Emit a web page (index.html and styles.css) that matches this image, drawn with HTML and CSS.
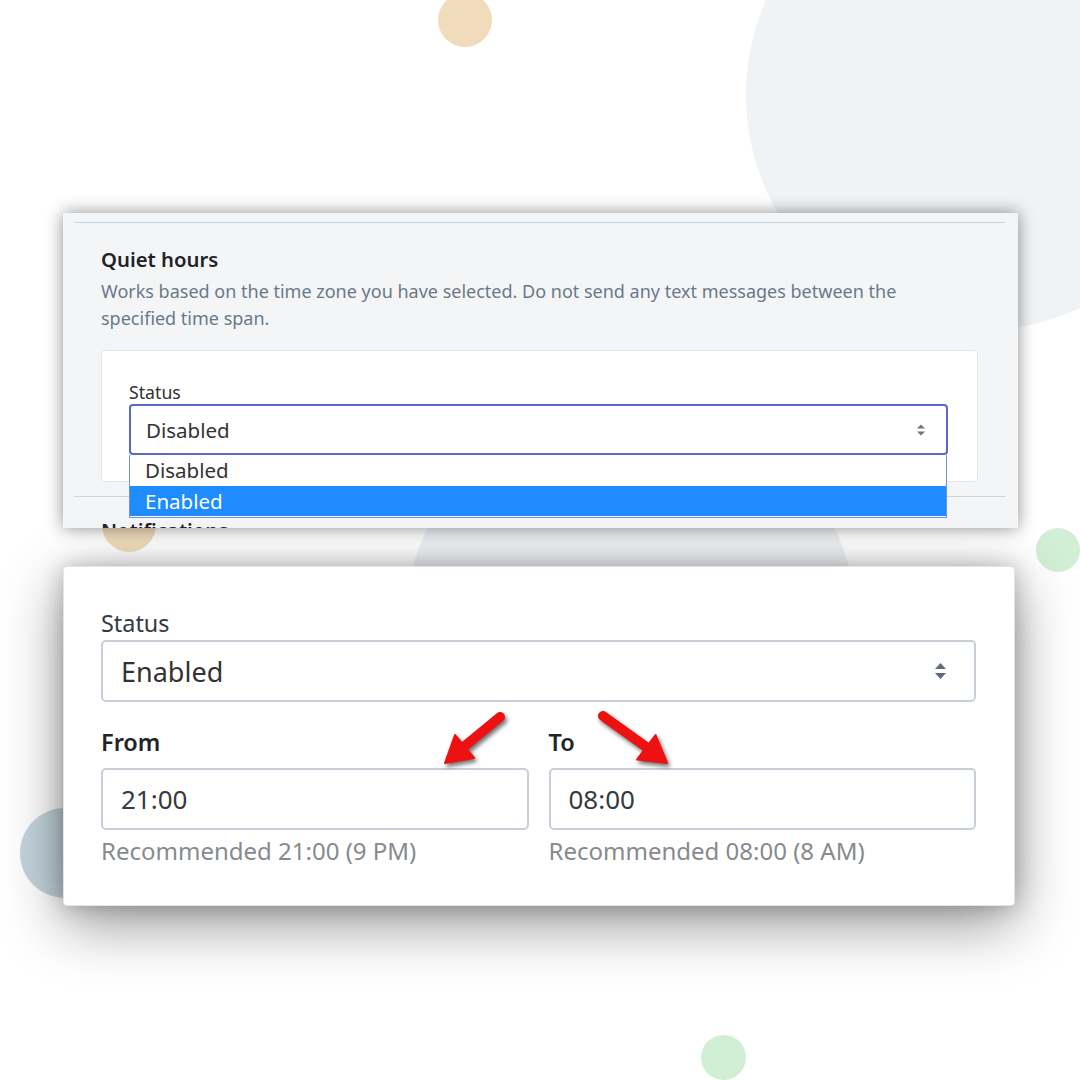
FILE: index.html
```html
<!DOCTYPE html>
<html lang="en">
<head>
    <meta charset="UTF-8">
    <meta name="viewport" content="width=device-width, initial-scale=1.0">
    <title>Quiet hours</title>
    <link rel="stylesheet" href="styles.css">
</head>
<body>
    <div class="stage">
        <!-- background dots -->
        <div class="dot dot-big"></div>
        <div class="dot dot-mid"></div>
        <div class="dot dot-tan-top"></div>
        <div class="dot dot-tan-left"></div>
        <div class="dot dot-green-right"></div>
        <div class="dot dot-green-bottom"></div>
        <div class="dot dot-slate"></div>

        <div class="cards">
            <div class="card card-settings">
                <div class="section">
                    <h3 class="section-title">Quiet hours</h3>
                    <p class="section-desc">Works based on the time zone you have selected. Do not send any text messages between the specified time span.</p>
                    <div class="panel">
                        <label class="small-label">Status</label>
                        <div class="select select-focus">
                            <span>Disabled</span>
                            <svg class="caret" width="10" height="14" viewBox="0 0 10 14"><path d="M1 5.5 5 1.5 9 5.5Z M1 8.5 5 12.5 9 8.5Z" fill="#6b7785"/></svg>
                            <ul class="options">
                                <li>Disabled</li>
                                <li class="active">Enabled</li>
                            </ul>
                        </div>
                    </div>
                </div>
                <div class="section section-next">
                    <h3 class="section-title">Notifications</h3>
                </div>
            </div>

            <div class="card card-zoom">
                <label class="big-label">Status</label>
                <div class="select select-big">
                    <span>Enabled</span>
                    <svg class="caret" width="13" height="20" viewBox="0 0 13 20"><path d="M1 8 6.5 2 12 8Z M1 12 6.5 18 12 12Z" fill="#5f6b78"/></svg>
                </div>
                <div class="time-row">
                    <div class="time-col">
                        <label class="bold-label">From</label>
                        <div class="time-input">21:00</div>
                        <div class="hint">Recommended 21:00 (9 PM)</div>
                    </div>
                    <div class="time-col">
                        <label class="bold-label">To</label>
                        <div class="time-input">08:00</div>
                        <div class="hint">Recommended 08:00 (8 AM)</div>
                    </div>
                </div>
                <svg class="arrows" width="952" height="340" viewBox="0 0 952 340">
                    <g fill="#ee1111" stroke="#ee1111">
                        <line x1="437" y1="151" x2="403" y2="179" stroke-width="10" stroke-linecap="round"/>
                        <polygon points="382,197 411,192 392,169" stroke-width="2" stroke-linejoin="round"/>
                        <line x1="540" y1="150" x2="586" y2="183" stroke-width="10" stroke-linecap="round"/>
                        <polygon points="604,197 574,193.5 592.5,169" stroke-width="2" stroke-linejoin="round"/>
                    </g>
                </svg>
            </div>
        </div>
    </div>
</body>
</html>
```

FILE: styles.css
```css
body {
    margin: 0;
    background-color: white;
    font-family: "Noto Sans", "Open Sans", sans-serif;
}
.stage {
    position: relative;
    width: 1080px;
    height: 1080px;
    overflow: hidden;
    background-color: white;
}
.dot {
    position: absolute;
    border-radius: 50%;
}
.dot-big {
    left: 746px;
    top: -140px;
    width: 470px;
    height: 470px;
    background-color: #eff3f6;
}
.dot-mid {
    left: 405px;
    top: 400px;
    width: 452px;
    height: 452px;
    background-color: #eef1f4;
}
.dot-tan-top {
    left: 438px;
    top: -7px;
    width: 54px;
    height: 54px;
    background-color: #f0dcbb;
}
.dot-tan-left {
    left: 102px;
    top: 498px;
    width: 54px;
    height: 54px;
    background-color: #f0dcbb;
}
.dot-green-right {
    left: 1036px;
    top: 528px;
    width: 44px;
    height: 44px;
    background-color: #d1efd4;
}
.dot-green-bottom {
    left: 701px;
    top: 1035px;
    width: 45px;
    height: 45px;
    background-color: #d1efd4;
}
.dot-slate {
    left: 20px;
    top: 808px;
    width: 90px;
    height: 90px;
    background-color: #c5d5dd;
}
.cards {
    position: relative;
    padding: 213px 0 0 63px;
    display: flex;
    flex-direction: column;
    gap: 38px;
}

/* top card: the settings page */
.card-settings {
    width: 955px;
    height: 315px;
    box-sizing: border-box;
    padding: 9px 13px 0 11px;
    background-color: #f4f5f7;
    overflow: hidden;
    box-shadow: 0 0 16px rgba(0, 0, 0, 0.45);
}
.section {
    border-top: 1px solid #c8d5e0;
    padding: 22px 27px 14px 27px;
}
.section-title {
    margin: 0;
    font-size: 20.3px;
    font-weight: 600;
    line-height: 28px;
    color: #1f2328;
}
.section-desc {
    max-width: 830px;
    margin: 5px 0 18px 0;
    font-size: 18px;
    line-height: 27px;
    color: #6a7988;
}
.panel {
    background-color: white;
    border: 1px solid #e3e6ea;
    border-radius: 4px;
    padding: 29px 28px 26px 27px;
}
.small-label {
    display: block;
    font-size: 17.7px;
    line-height: 24px;
    color: #333;
}
.select {
    position: relative;
    display: flex;
    align-items: center;
    justify-content: space-between;
    background-color: white;
    box-sizing: border-box;
    color: #333;
}
.select-focus {
    height: 51px;
    margin-right: 1px;
    padding: 0 20px 0 15px;
    border: 2px solid #5a69c8;
    border-radius: 4px;
    font-size: 20.5px;
}
.options {
    position: absolute;
    left: -2px;
    right: -1px;
    top: 49px;
    margin: 0;
    padding: 0;
    list-style: none;
    background-color: white;
    border: 1px solid #6e94d4;
    border-top: none;
}
.options li {
    height: 31px;
    line-height: 31px;
    padding-left: 15px;
}
.options li.active {
    background-color: #1e8cff;
    color: white;
    border-bottom: 1px solid white;
    height: 30px;
}
.section-next {
    padding-top: 19px;
}

/* bottom card: the zoomed form */
.card-zoom {
    position: relative;
    width: 952px;
    height: 340px;
    box-sizing: border-box;
    padding: 39px 38px 0 37px;
    background-color: white;
    border: 1px solid #e2e4e7;
    border-radius: 4px;
    box-shadow: 0 18px 60px rgba(0, 0, 0, 0.42), 0 0 22px rgba(0, 0, 0, 0.22);
}
.big-label {
    display: block;
    font-size: 23.4px;
    line-height: 34px;
    color: #343a40;
}
.select-big {
    height: 62px;
    padding: 0 27px 0 18px;
    border: 2px solid #c8cfd8;
    border-radius: 5px;
    font-size: 27px;
}
.time-row {
    display: grid;
    grid-template-columns: 1fr 1fr;
    gap: 20px;
    margin-top: 14px;
}
.bold-label {
    display: block;
    font-size: 23.5px;
    font-weight: 600;
    line-height: 52px;
    color: #212529;
}
.time-input {
    height: 62px;
    box-sizing: border-box;
    padding: 0 18px;
    border: 2px solid #c8cfd8;
    border-radius: 5px;
    font-size: 26px;
    line-height: 58px;
    color: #343a40;
}
.hint {
    margin-top: 4px;
    font-size: 24px;
    line-height: 34px;
    color: #868a8e;
}
.arrows {
    position: absolute;
    left: -1px;
    top: -1px;
    filter: drop-shadow(2px 3px 2px rgba(0, 0, 0, 0.55));
}
```
